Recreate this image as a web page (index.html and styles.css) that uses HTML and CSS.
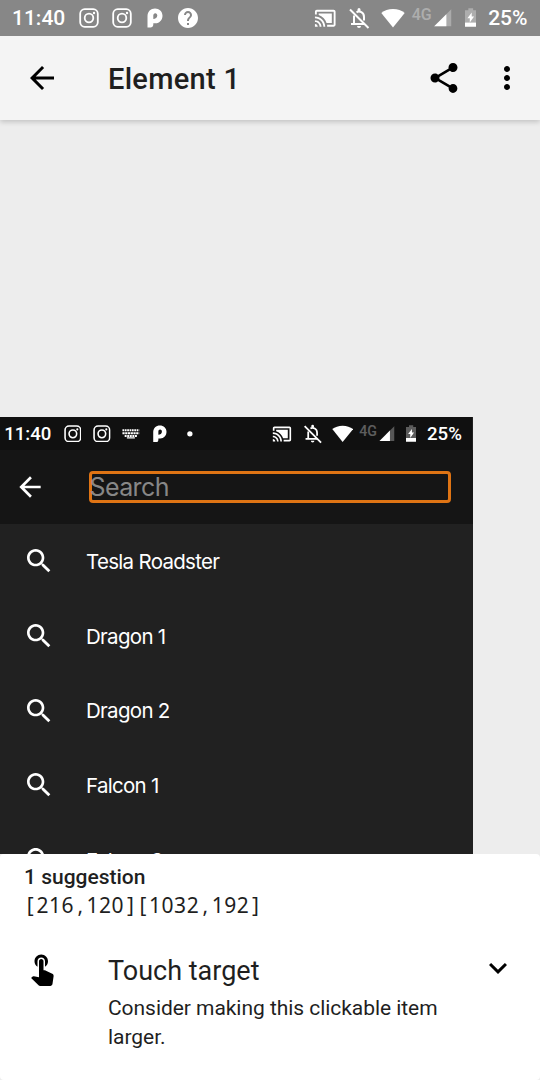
FILE: index.html
```html
<!DOCTYPE html>
<html lang="en">
<head>
<meta charset="utf-8">
<title>Element 1</title>
<link rel="stylesheet" href="styles.css">
</head>
<body>
<svg class="defs" width="0" height="0">
  <symbol id="insta" viewBox="0 0 20 20"><rect x="1.2" y="1.2" width="17.6" height="17.6" rx="4.5" fill="none" stroke="currentColor" stroke-width="1.8"/><circle cx="10" cy="10" r="4.3" fill="none" stroke="currentColor" stroke-width="1.8"/><circle cx="15" cy="5" r="1.2" fill="currentColor"/></symbol>
  <symbol id="pmark" viewBox="0 0 20 20"><path fill="currentColor" fill-rule="evenodd" d="M2.500 19.500V8C2.500 3.500 5.800.5 10 .5s7.500 3 7.500 7.200-3 7.600-7 7.600H8.300V16.500C8.300 18.500 7 19.500 5.500 19.500ZM8.300 11c2 0 4-1.200 4-3.400 0-1.500-.8-2.400-2-2.400s-2 .9-2 2.400Z"/></symbol>
  <symbol id="help" viewBox="2 2 20 20"><path fill="currentColor" d="M12 2C6.480 2 2 6.480 2 12s4.480 10 10 10 10-4.480 10-10S17.520 2 12 2zm1 17h-2v-2h2v2zm2.070-7.750l-.9.920C13.450 12.900 13 13.500 13 15h-2v-.5c0-1.100.45-2.100 1.170-2.830l1.240-1.260c.37-.36.59-.86.59-1.410 0-1.100-.9-2-2-2s-2 .9-2 2H8c0-2.210 1.790-4 4-4s4 1.790 4 4c0 .88-.36 1.680-.93 2.250z"/></symbol>
  <symbol id="keys" viewBox="0 0 20 20"><g fill="none" stroke="currentColor" stroke-width="2.300"><path d="M.5 6H19.500" stroke-dasharray="2 .67"/><path d="M.5 9.300H19.500" stroke-dasharray="2.500 .6"/><path d="M3 12.500H17" stroke-dasharray="2.200 .7"/><path d="M5.500 14.500H14.500" stroke-width="1.500"/></g></symbol>
  <symbol id="dot" viewBox="0 0 20 20"><circle cx="10" cy="10" r="3" fill="currentColor"/></symbol>
  <symbol id="cast" viewBox="0 0 24 24"><path fill="currentColor" d="M1 18v3h3c0-1.660-1.340-3-3-3zm0-4v2c2.760 0 5 2.240 5 5h2c0-3.870-3.130-7-7-7zm18-7H5v1.630c3.960 1.280 7.090 4.410 8.370 8.370H19V7zM1 10v2c4.970 0 9 4.030 9 9h2c0-6.080-4.930-11-11-11zm20-7H3c-1.100 0-2 .9-2 2v3h2V5h18v14h-7v2h7c1.100 0 2-.9 2-2V5c0-1.100-.9-2-2-2z"/></symbol>
  <symbol id="belloff" viewBox="0 0 24 24"><g fill="none" stroke="currentColor" stroke-width="2"><path d="M3 3.500L21.500 22"/><path d="M7 9.500V18H17M4 18H18M9.500 6.300C12.500 4.500 17 6.300 17 11v3.500"/></g><path fill="currentColor" d="M10.500 5V3.500a1.500 1.500 0 0 1 3 0V5zM10 20h4a2 2 0 0 1-4 0z"/></symbol>
  <symbol id="wifi" viewBox="0 0 24 24"><path fill="currentColor" d="M12 21.500L.3 6.900C3.300 4.400 7.400 3 12 3s8.700 1.400 11.700 3.900z"/></symbol>
  <symbol id="signal" viewBox="0 0 18 18"><path fill="currentColor" opacity=".3" d="M0 18L18 0V18z"/><path fill="currentColor" d="M0 18L12.700 5.300V18z"/></symbol>
  <symbol id="battery" viewBox="0 0 12 20"><path fill="currentColor" opacity=".32" d="M0 2.200H3.500V0h5v2.200H12V15H0z"/><path fill="currentColor" d="M0 15h12v4.500H0zM7 4.500v4.200h2.500L5 15V10.500H2.500z"/></symbol>
  <symbol id="back" viewBox="0 0 24 24"><path fill="currentColor" d="M20 11H7.830l5.590-5.590L12 4l-8 8 8 8 1.410-1.410L7.830 13H20v-2z"/></symbol>
  <symbol id="search" viewBox="0 0 24 24"><path fill="currentColor" d="M15.500 14h-.79l-.28-.27C15.410 12.590 16 11.110 16 9.500 16 5.910 13.090 3 9.500 3S3 5.910 3 9.500 5.910 16 9.500 16c1.610 0 3.090-.59 4.230-1.570l.27.28v.79l5 4.990L20.490 19l-4.990-5zm-6 0C7.010 14 5 11.990 5 9.500S7.010 5 9.500 5 14 7.010 14 9.500 11.990 14 9.500 14z"/></symbol>
</svg>

<div class="status">
  <span class="time">11:40</span>
  <div class="notes">
    <span class="slot"><svg><use href="#insta"/></svg></span>
    <span class="slot"><svg><use href="#insta"/></svg></span>
    <span class="slot"><svg><use href="#pmark"/></svg></span>
    <span class="slot"><svg><use href="#help"/></svg></span>
  </div>
  <div class="system">
    <svg class="cast"><use href="#cast"/></svg>
    <svg class="bell"><use href="#belloff"/></svg>
    <svg class="wifi"><use href="#wifi"/></svg>
    <span class="net">4G</span>
    <svg class="signal"><use href="#signal"/></svg>
    <svg class="battery"><use href="#battery"/></svg>
    <span class="level">25%</span>
  </div>
</div>

<header class="appbar">
  <svg class="icon"><use href="#back"/></svg>
  <h1 class="title">Element 1</h1>
  <svg class="icon" viewBox="0 0 24 24"><path d="M18 16.080c-.76 0-1.440.3-1.960.77L8.910 12.700c.05-.23.09-.46.09-.7s-.04-.47-.09-.7l7.050-4.110c.54.5 1.250.81 2.040.81 1.660 0 3-1.340 3-3s-1.340-3-3-3-3 1.340-3 3c0 .24.04.47.09.7L8.040 9.810C7.500 9.310 6.790 9 6 9c-1.660 0-3 1.340-3 3s1.340 3 3 3c.79 0 1.500-.31 2.040-.81l7.120 4.160c-.05.21-.08.43-.08.65 0 1.610 1.310 2.920 2.920 2.920s2.920-1.310 2.920-2.920-1.310-2.920-2.920-2.920z"/></svg>
  <svg class="icon more" viewBox="0 0 24 24"><path d="M12 8c1.100 0 2-.9 2-2s-.9-2-2-2-2 .9-2 2 .9 2 2 2zm0 2c-1.100 0-2 .9-2 2s.9 2 2 2 2-.9 2-2-.9-2-2-2zm0 6c-1.100 0-2 .9-2 2s.9 2 2 2 2-.9 2-2-.9-2-2-2z"/></svg>
</header>

<main class="preview">
  <div class="phone">
    <div class="status status-small">
      <span class="time">11:40</span>
      <div class="notes">
        <span class="slot"><svg><use href="#insta"/></svg></span>
        <span class="slot"><svg><use href="#insta"/></svg></span>
        <span class="slot"><svg><use href="#keys"/></svg></span>
        <span class="slot"><svg><use href="#pmark"/></svg></span>
        <span class="slot"><svg><use href="#dot"/></svg></span>
      </div>
      <div class="system">
        <svg class="cast"><use href="#cast"/></svg>
        <svg class="bell"><use href="#belloff"/></svg>
        <svg class="wifi"><use href="#wifi"/></svg>
        <span class="net">4G</span>
        <svg class="signal"><use href="#signal"/></svg>
        <svg class="battery"><use href="#battery"/></svg>
        <span class="level">25%</span>
      </div>
    </div>
    <div class="searchbar">
      <svg class="glyph"><use href="#back"/></svg>
      <div class="field"><span class="hint">Search</span></div>
    </div>
    <ul class="results">
      <li class="result"><svg class="glyph"><use href="#search"/></svg><span>Tesla Roadster</span></li>
      <li class="result"><svg class="glyph"><use href="#search"/></svg><span>Dragon 1</span></li>
      <li class="result"><svg class="glyph"><use href="#search"/></svg><span>Dragon 2</span></li>
      <li class="result"><svg class="glyph"><use href="#search"/></svg><span>Falcon 1</span></li>
      <li class="result"><svg class="glyph"><use href="#search"/></svg><span>Falcon 9</span></li>
    </ul>
  </div>
</main>

<section class="sheet">
  <h2 class="count">1 suggestion</h2>
  <p class="bounds"><i>[</i>216<i>,</i>120<i>]</i><i>[</i>1032<i>,</i>192<i>]</i></p>
  <div class="item">
    <svg class="icon" viewBox="0 0 24 24"><path d="M9 11.240V7.500C9 6.120 10.120 5 11.500 5S14 6.120 14 7.500v3.740c1.210-.81 2-2.180 2-3.740C16 5.010 13.990 3 11.500 3S7 5.010 7 7.500c0 1.560.79 2.930 2 3.740zm9.840 4.630l-4.540-2.260c-.17-.07-.35-.11-.54-.11H13v-6c0-.83-.67-1.500-1.500-1.500S10 6.670 10 7.500v10.740l-3.430-.72c-.08-.01-.15-.03-.24-.03-.31 0-.59.13-.79.33l-.79.8 4.940 4.940c.27.27.65.44 1.060.44h6.790c.75 0 1.330-.55 1.440-1.280l.75-5.270c.01-.07.02-.14.02-.2 0-.62-.38-1.160-.91-1.380z"/></svg>
    <div class="copy">
      <h3 class="name">Touch target</h3>
      <p class="desc">Consider making this clickable item larger.</p>
    </div>
    <svg class="icon" viewBox="0 0 24 24"><path d="M16.590 8.590L12 13.170 7.410 8.590 6 10l6 6 6-6z"/></svg>
  </div>
</section>
</body>
</html>
```
FILE: styles.css
```css
* { box-sizing: border-box; margin: 0; padding: 0; }
body {
  width: 540px; height: 1080px; overflow: hidden;
  display: flex; flex-direction: column;
  background: #ededed; color: #1f1f1f;
  font-family: Roboto, "Noto Sans", sans-serif;
}
.defs { position: absolute; }

/* Status bar, scaled through --u */
.status {
  --u: 1px;
  flex: none; display: flex; align-items: center;
  width: calc(var(--u) * 540); height: calc(var(--u) * 36);
  padding: 0 calc(var(--u) * 12.500) 0 calc(var(--u) * 12);
  background: #878787; color: #fff;
  font-size: calc(var(--u) * 21); font-weight: 500;
}
.status-small { --u: .887px; height: 33px; margin-left: -6.500px; padding-right: 10.600px; background: #101010; }
.time { width: calc(var(--u) * 60.500); }
.notes { display: flex; }
.slot { width: calc(var(--u) * 33); display: flex; justify-content: center; }
.slot svg { width: calc(var(--u) * 20); height: calc(var(--u) * 20); }
.system { display: flex; align-items: center; margin-left: auto; }
.system svg { flex: none; }
.cast { width: calc(var(--u) * 22.500); height: calc(var(--u) * 22.500); margin-right: calc(var(--u) * 10.500); }
.bell { width: calc(var(--u) * 24); height: calc(var(--u) * 24); margin-right: calc(var(--u) * 10.500); }
.wifi { width: calc(var(--u) * 24); height: calc(var(--u) * 24); margin-right: calc(var(--u) * 6.500); }
.net { width: calc(var(--u) * 22.500); font-size: calc(var(--u) * 16); line-height: 1; opacity: .32; padding-bottom: calc(var(--u) * 6); }
.signal { width: calc(var(--u) * 17.500); height: calc(var(--u) * 17.500); margin-right: calc(var(--u) * 13); }
.battery { width: calc(var(--u) * 11.500); height: calc(var(--u) * 19.500); margin-right: calc(var(--u) * 12); }

.icon { flex: none; width: 36px; height: 36px; fill: #000; color: #000; }
.appbar {
  flex: none; display: flex; align-items: center;
  height: 84px; padding: 0 15px 0 24px;
  background: #f4f4f4; box-shadow: 0 2px 5px rgba(0, 0, 0, .18);
  clip-path: inset(0 0 -8px 0);
  z-index: 1;
}
.title { flex: 1; margin: 2px 0 0 48px; font-size: 29px; font-weight: 500; letter-spacing: .3px; }
.more { margin-left: 27px; }

.preview { flex: none; height: 734px; padding-top: 297px; overflow: hidden; }
.phone { width: 473px; height: 437px; overflow: hidden; background: #212121; color: #fff; }
.glyph { flex: none; width: 32px; height: 32px; }
.searchbar { display: flex; align-items: center; height: 74px; padding: 0 0 1px 14px; background: #151515; }
.field {
  width: 362px; height: 32px; margin-left: 43px;
  border: 3px solid #df7414; border-radius: 4px;
  color: #878787; font: 400 25px/27px Inter, sans-serif; letter-spacing: -.6px;
}
.hint { margin-left: -2.500px; }
.results { list-style: none; }
.result {
  display: flex; align-items: center; height: 74.700px; padding-left: 23px; gap: 31px;
  font: 400 20.500px Inter, sans-serif; letter-spacing: -.7px;
}

.sheet { flex: 1; padding: 10px 24px 0; background: #fff; border-radius: 4px; }
.count { font-size: 21px; line-height: 27px; font-weight: 500; }
.bounds { font: 400 21px/29px "Noto Sans", sans-serif; letter-spacing: .5px; }
.bounds i { display: inline-block; width: 12.500px; font-style: normal; text-align: center; letter-spacing: 0; }
.item { display: flex; margin-top: 30px; }
.copy { flex: 1; margin-left: 48px; }
.name { font-size: 27px; line-height: 42px; font-weight: 400; }
.desc { width: 350px; margin-top: 2px; font-size: 21px; line-height: 28.500px; letter-spacing: -.05px; }
```
